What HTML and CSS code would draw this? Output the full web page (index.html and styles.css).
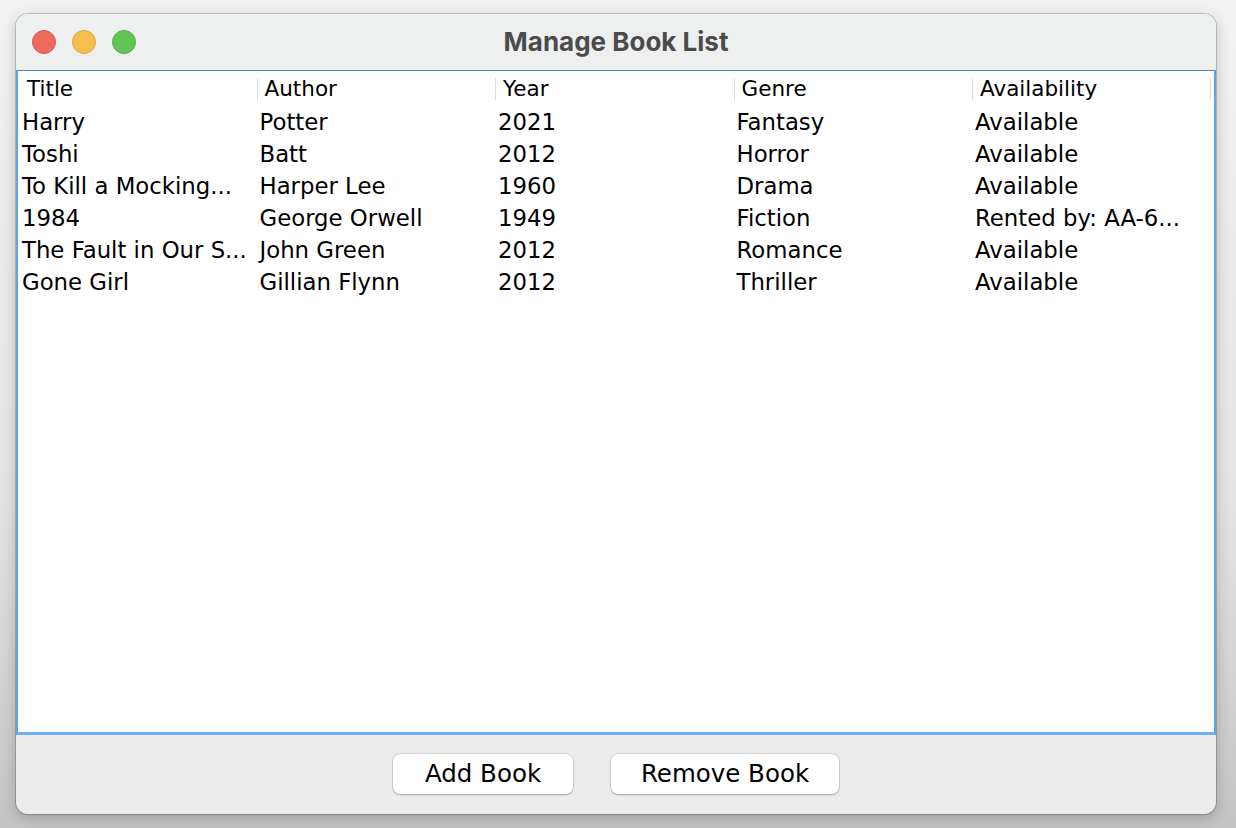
FILE: index.html
```html
<!DOCTYPE html>
<html>
<head>
<meta charset="utf-8">
<link rel="stylesheet" href="styles.css">
</head>
<body>
<div class="window">
  <div class="titlebar">
    <div class="lights">
      <span class="light red"></span>
      <span class="light yellow"></span>
      <span class="light green"></span>
    </div>
    <div class="title">Manage Book List</div>
  </div>
  <div class="table-panel">
    <div class="thead">
      <div class="th first">Title</div>
      <div class="th">Author</div>
      <div class="th">Year</div>
      <div class="th">Genre</div>
      <div class="th last">Availability</div>
    </div>
    <div class="tbody">
      <div class="tr"><div class="td">Harry</div><div class="td">Potter</div><div class="td">2021</div><div class="td">Fantasy</div><div class="td">Available</div></div>
      <div class="tr"><div class="td">Toshi</div><div class="td">Batt</div><div class="td">2012</div><div class="td">Horror</div><div class="td">Available</div></div>
      <div class="tr"><div class="td">To Kill a Mocking...</div><div class="td">Harper Lee</div><div class="td">1960</div><div class="td">Drama</div><div class="td">Available</div></div>
      <div class="tr"><div class="td">1984</div><div class="td">George Orwell</div><div class="td">1949</div><div class="td">Fiction</div><div class="td">Rented by: AA-6...</div></div>
      <div class="tr"><div class="td">The Fault in Our S...</div><div class="td">John Green</div><div class="td">2012</div><div class="td">Romance</div><div class="td">Available</div></div>
      <div class="tr"><div class="td">Gone Girl</div><div class="td">Gillian Flynn</div><div class="td">2012</div><div class="td">Thriller</div><div class="td">Available</div></div>
    </div>
  </div>
  <div class="bottom">
    <button class="btn add">Add Book</button>
    <button class="btn remove">Remove Book</button>
  </div>
</div>
</body>
</html>
```
FILE: styles.css
```css
html, body {
  margin: 0;
  padding: 0;
}
body {
  width: 1236px;
  height: 828px;
  background: linear-gradient(180deg, #f2f2f2 0%, #e4e4e4 60%, #c4c4c4 100%);
  overflow: hidden;
  padding-top: 14px;
  padding-left: 16px;
  box-sizing: border-box;
}
.window {
  width: 1200px;
  height: 800px;
  border-radius: 12px;
  overflow: hidden;
  background: #ececec;
  box-shadow: 0 0 0 1px rgba(0,0,0,0.18), 0 4px 14px rgba(0,0,0,0.22);
  display: flex;
  flex-direction: column;
}
.titlebar {
  height: 56px;
  flex: none;
  background: #eef0f0;
  display: flex;
  align-items: center;
  justify-content: center;
  position: relative;
}
.lights {
  position: absolute;
  left: 16px;
  top: 16px;
  display: flex;
  gap: 16px;
}
.light {
  width: 24px;
  height: 24px;
  border-radius: 50%;
  box-sizing: border-box;
}
.red { background: #ee6a5e; border: 1px solid #d65a4f; }
.yellow { background: #f5be4f; border: 1px solid #dba640; }
.green { background: #61c554; border: 1px solid #52ad46; }
.title {
  font-family: Inter, "Liberation Sans", sans-serif;
  font-weight: 700;
  font-size: 26px;
  color: #4b4b4b;
  margin-top: -2px;
}
.table-panel {
  flex: none;
  height: 665px;
  box-sizing: border-box;
  background: #fff;
  border-top: 1px solid #3b86cc;
  border-left: 2px solid #5aa6e6;
  border-right: 2px solid #5aa6e6;
  border-bottom: 3px solid #66b2f2;
  font-family: "DejaVu Sans", sans-serif;
  color: #000;
}
.thead {
  display: grid;
  grid-template-columns: repeat(5, 238.5px);
  height: 34px;
  padding-top: 1px;
  align-items: center;
}
.th {
  font-size: 21.5px;
  padding-left: 7px;
  border-left: 1px solid #dcdcdc;
  line-height: 22px;
  white-space: nowrap;
}
.th.first {
  border-left: 1px solid transparent;
  padding-left: 8px;
}
.th.last {
  border-right: 1px solid #dcdcdc;
}
.tr {
  display: grid;
  grid-template-columns: repeat(5, 238.5px);
  height: 32px;
  align-items: center;
}
.td {
  font-size: 22.8px;
  line-height: 28px;
  padding-left: 4px;
  white-space: nowrap;
  overflow: hidden;
}
.td + .td {
  padding-left: 3px;
}
.bottom {
  flex: 1;
  display: flex;
  justify-content: center;
  align-items: center;
  gap: 38px;
  padding-bottom: 2px;
}
.btn {
  height: 40px;
  border: none;
  background: #fff;
  border-radius: 7px;
  box-shadow: 0 0 0 0.5px rgba(0,0,0,0.18), 0 1px 2px rgba(0,0,0,0.25);
  font-family: "DejaVu Sans", sans-serif;
  font-size: 24.5px;
  color: #000;
  padding: 0;
}
.add { width: 180px; }
.remove { width: 228px; }
```
